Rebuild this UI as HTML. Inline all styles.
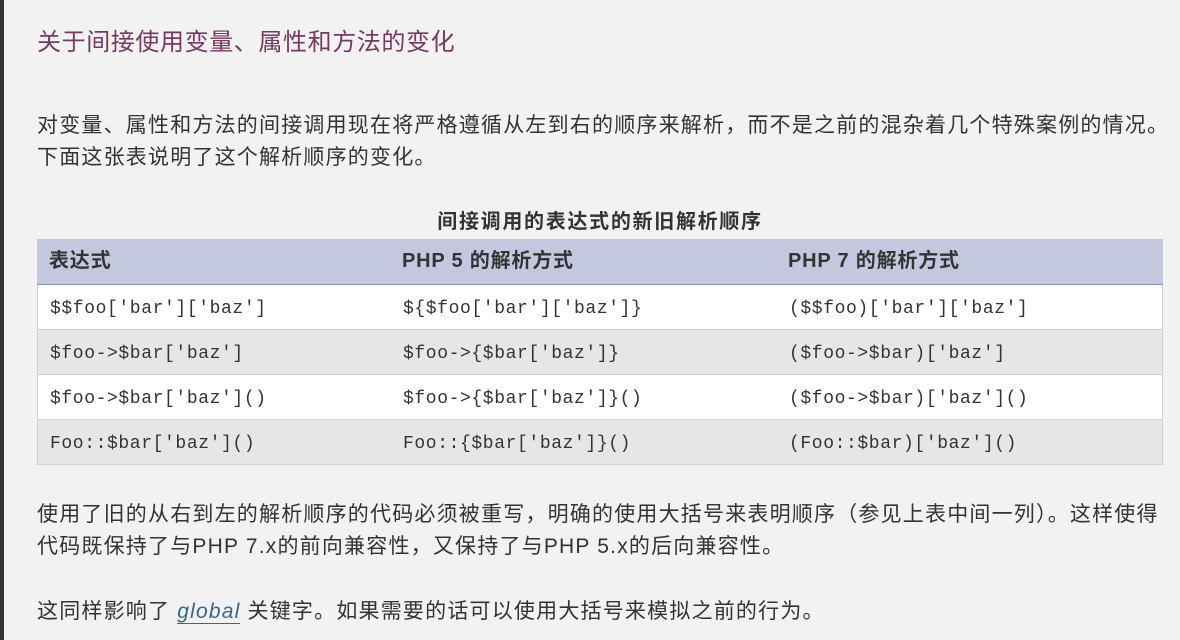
<!DOCTYPE html>
<html><head><meta charset="utf-8"><style>
body{margin:0;width:1180px;height:640px;background:#f2f2f2;overflow:hidden;position:relative;font-family:"Liberation Sans","Noto Sans CJK SC",sans-serif;color:#333}
.bar{position:absolute;left:0;top:0;width:4px;height:640px;background:#333}
h1{position:absolute;left:37px;top:26px;margin:0;font-weight:normal;font-size:24px;letter-spacing:0.6px;color:#793862;line-height:34px;white-space:nowrap}
p{position:absolute;left:37px;margin:0;font-size:21px;letter-spacing:1.2px;line-height:32px;white-space:nowrap}
.cap{position:absolute;left:37px;width:1126px;top:207px;text-align:center;font-weight:bold;font-size:20px;letter-spacing:1.7px;line-height:30px}
.tb{position:absolute;left:37px;top:239px;width:1126px}
.r{position:absolute;left:0;width:1124px;height:44px;border:1px solid #d0d0d0;border-top:none;background:#fff}
.r.g{background:#e6e6e6}
.r span{position:absolute;top:2px;line-height:44px;font-family:"Liberation Mono",monospace;font-size:18px;letter-spacing:0.6px;color:#333}
.h{position:absolute;left:0;top:0;width:1126px;height:45px;background:#c4c8de;border-bottom:1px solid #8890c0}
.h span{position:absolute;line-height:45px;font-weight:bold;font-size:20px;letter-spacing:0.8px;color:#333}
.c1{left:12px}.c2{left:365px}.c3{left:751px}
a{color:#336699;font-style:italic;text-decoration:none;border-bottom:1px solid #336699}
</style></head><body>
<div class="bar"></div>
<h1>关于间接使用变量、属性和方法的变化</h1>
<p style="top:110px">对变量、属性和方法的间接调用现在将严格遵循从左到右的顺序来解析，而不是之前的混杂着几个特殊案例的情况。<br>下面这张表说明了这个解析顺序的变化。</p>
<div class="cap">间接调用的表达式的新旧解析顺序</div>
<div class="tb">
<div class="h"><span class="c1">表达式</span><span class="c2">PHP 5 的解析方式</span><span class="c3">PHP 7 的解析方式</span></div>
<div class="r" style="top:46px"><span class="c1">$$foo['bar']['baz']</span><span class="c2">${$foo['bar']['baz']}</span><span class="c3">($$foo)['bar']['baz']</span></div>
<div class="r g" style="top:91px"><span class="c1">$foo-&gt;$bar['baz']</span><span class="c2">$foo-&gt;{$bar['baz']}</span><span class="c3">($foo-&gt;$bar)['baz']</span></div>
<div class="r" style="top:136px"><span class="c1">$foo-&gt;$bar['baz']()</span><span class="c2">$foo-&gt;{$bar['baz']}()</span><span class="c3">($foo-&gt;$bar)['baz']()</span></div>
<div class="r g" style="top:181px"><span class="c1">Foo::$bar['baz']()</span><span class="c2">Foo::{$bar['baz']}()</span><span class="c3">(Foo::$bar)['baz']()</span></div>
</div>
<p style="top:499px">使用了旧的从右到左的解析顺序的代码必须被重写，明确的使用大括号来表明顺序（参见上表中间一列）。这样使得<br>代码既保持了与PHP 7.x的前向兼容性，又保持了与PHP 5.x的后向兼容性。</p>
<p style="top:596px">这同样影响了 <a>global</a> 关键字。如果需要的话可以使用大括号来模拟之前的行为。</p>
</body></html>
